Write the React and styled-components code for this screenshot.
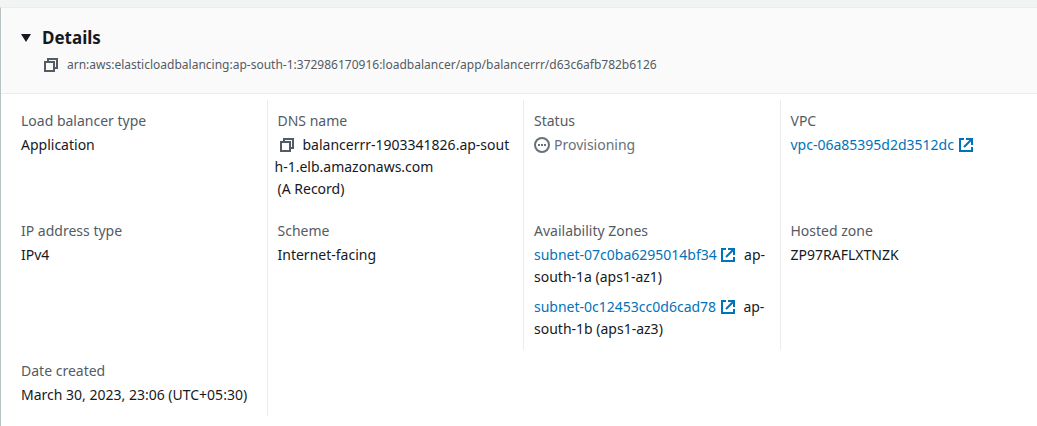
import React, { useState } from "react";
import styled, { createGlobalStyle } from "styled-components";

const GlobalStyle = createGlobalStyle`
  * { box-sizing: border-box; }
  body {
    margin: 0;
    background: #f2f3f3;
    color: #16191f;
    font-family: "Noto Sans", "Open Sans", sans-serif;
    font-size: 14px;
    line-height: 22px;
  }
`;

const Page = styled.main`
  display: flex;
  flex-direction: column;
  min-height: 100vh;
  padding-top: 7px;
`;

const Panel = styled.section`
  flex: 1;
  background: #fff;
  border-top: 1px solid #eaeded;
  border-left: 1px solid #b9c1c5;
`;

const PanelHeader = styled.header`
  display: flex;
  flex-direction: column;
  gap: 5px;
  padding: 19px 20px 17px;
  background: #fafafa;
  border-bottom: 1px solid #eaeded;
`;

const Title = styled.h2`
  margin: 0;
  font-size: 17px;
  line-height: 22px;
`;

const Toggle = styled.button`
  display: flex;
  align-items: center;
  gap: 11px;
  padding: 0;
  border: 0;
  background: none;
  color: inherit;
  font: inherit;
  cursor: pointer;
`;

const Caret = styled.svg`
  width: 10px;
  height: 8px;
  fill: currentColor;
  transform: ${(p) => (p.$open ? "none" : "rotate(-90deg)")};
`;

const Arn = styled.div`
  display: flex;
  align-items: center;
  gap: 8px;
  padding-left: 22px;
  color: #545b64;
  font-size: 12px;
`;

const IconButton = styled.button`
  display: inline-flex;
  padding: 0;
  border: 0;
  background: none;
  color: #545b64;
  vertical-align: -3px;
  cursor: pointer;
`;

const Icon = styled.svg`
  width: 16px;
  height: 16px;
  fill: none;
  stroke: currentColor;
  stroke-width: 2;
  vertical-align: -3px;
`;

const Fields = styled.dl`
  display: grid;
  grid-template-columns: repeat(4, 1fr);
  margin: 0;
  padding: 6px 0 10px 10px;
`;

const Cell = styled.div`
  min-width: 0;
  padding: 10px;
  border-right: 1px solid #eaeded;

  &:nth-child(4n) {
    border-right-color: transparent;
  }
`;

const Label = styled.dt`
  margin-bottom: 2px;
  color: #545b64;
`;

const Value = styled.dd`
  margin: 0;
`;

const CopyValue = styled.div`
  margin-left: -3px;
  padding-right: 2px;
  word-break: break-all;

  ${IconButton} {
    margin: 0 8px 0 4px;
  }
`;

const Status = styled.span`
  display: flex;
  align-items: center;
  gap: 4px;
  color: #687078;
`;

const Link = styled.a`
  color: #0073bb;
  text-decoration: none;
  white-space: nowrap;

  &:hover {
    text-decoration: underline;
  }
`;

const ZoneList = styled.ul`
  display: grid;
  gap: 8px;
  margin: 0;
  padding: 0;
  list-style: none;
`;

const ZoneLink = styled(Link)`
  margin-right: 4px;
`;

function CopyButton({ label }) {
  return (
    <IconButton type="button" aria-label={label}>
      <Icon viewBox="0 0 16 16" aria-hidden="true">
        <path d="M2 5h9v9H2z" />
        <path d="M5 5V2h9v9h-3" />
      </Icon>
    </IconButton>
  );
}

function ExternalIcon() {
  return (
    <Icon viewBox="0 0 16 16" aria-hidden="true">
      <path d="M6 2H2v12h12v-4" />
      <path d="M8 2h6v6M14 2L6 10" />
    </Icon>
  );
}

function Field({ label, children }) {
  return (
    <Cell>
      <Label>{label}</Label>
      <Value>{children}</Value>
    </Cell>
  );
}

const zones = [
  { subnet: "subnet-07c0ba6295014bf34", zone: "ap-south-1a (aps1-az1)" },
  { subnet: "subnet-0c12453cc0d6cad78", zone: "ap-south-1b (aps1-az3)" },
];

export default function App() {
  const [open, setOpen] = useState(true);
  return (
    <>
      <GlobalStyle />
      <Page>
        <Panel>
          <PanelHeader>
            <Title>
              <Toggle type="button" aria-expanded={open} onClick={() => setOpen(!open)}>
                <Caret $open={open} viewBox="0 0 10 8" aria-hidden="true">
                  <path d="M0 0h10L5 8z" />
                </Caret>
                Details
              </Toggle>
            </Title>
            <Arn>
              <CopyButton label="Copy ARN" />
              <span>arn:aws:elasticloadbalancing:ap-south-1:372986170916:loadbalancer/app/balancerrr/d63c6afb782b6126</span>
            </Arn>
          </PanelHeader>
          {open && (
            <Fields>
              <Field label="Load balancer type">Application</Field>
              <Field label="DNS name">
                <CopyValue>
                  <CopyButton label="Copy DNS name" />
                  balancerrr-1903341826.ap-south-1.elb.amazonaws.com
                </CopyValue>
                (A Record)
              </Field>
              <Field label="Status">
                <Status>
                  <Icon viewBox="0 0 16 16" aria-hidden="true">
                    <circle cx="8" cy="8" r="7" />
                    <path d="M4 8h2M7 8h2M10 8h2" />
                  </Icon>
                  Provisioning
                </Status>
              </Field>
              <Field label="VPC">
                <Link href="#vpc">
                  vpc-06a85395d2d3512dc <ExternalIcon />
                </Link>
              </Field>
              <Field label="IP address type">IPv4</Field>
              <Field label="Scheme">Internet-facing</Field>
              <Field label="Availability Zones">
                <ZoneList>
                  {zones.map((z) => (
                    <li key={z.subnet}>
                      <ZoneLink href={`#${z.subnet}`}>
                        {z.subnet} <ExternalIcon />
                      </ZoneLink>{" "}
                      {z.zone}
                    </li>
                  ))}
                </ZoneList>
              </Field>
              <Field label="Hosted zone">ZP97RAFLXTNZK</Field>
              <Field label="Date created">March 30, 2023, 23:06 (UTC+05:30)</Field>
            </Fields>
          )}
        </Panel>
      </Page>
    </>
  );
}
